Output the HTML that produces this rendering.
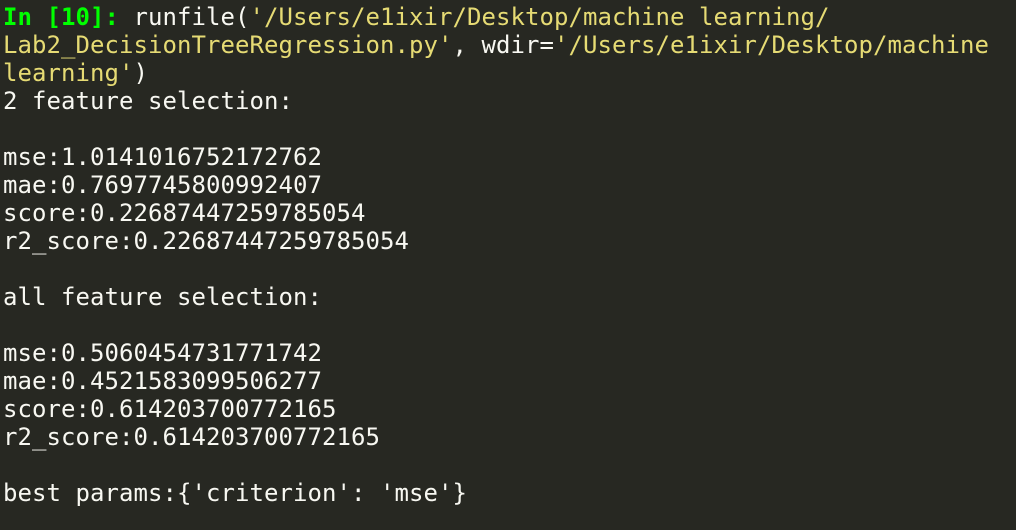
<!DOCTYPE html>
<html><head><meta charset="utf-8"><style>
html,body{margin:0;padding:0;background:#272822;width:1016px;height:530px;overflow:hidden}
pre{margin:0;padding:3px 0 0 3px;font-family:"DejaVu Sans Mono","Liberation Mono",monospace;font-size:24px;letter-spacing:0.05px;line-height:28px;color:#f8f8f2;white-space:pre}
.g{color:#00ff00;font-weight:bold}.y{color:#e6db74}
</style></head><body><pre><span class="g">In [10]:</span> runfile(<span class="y">'/Users/e1ixir/Desktop/machine learning/</span>
<span class="y">Lab2_DecisionTreeRegression.py'</span>, wdir=<span class="y">'/Users/e1ixir/Desktop/machine</span>
<span class="y">learning'</span>)
2 feature selection:

mse:1.0141016752172762
mae:0.7697745800992407
score:0.22687447259785054
r2_score:0.22687447259785054

all feature selection:

mse:0.5060454731771742
mae:0.4521583099506277
score:0.614203700772165
r2_score:0.614203700772165

best params:{'criterion': 'mse'}</pre></body></html>
